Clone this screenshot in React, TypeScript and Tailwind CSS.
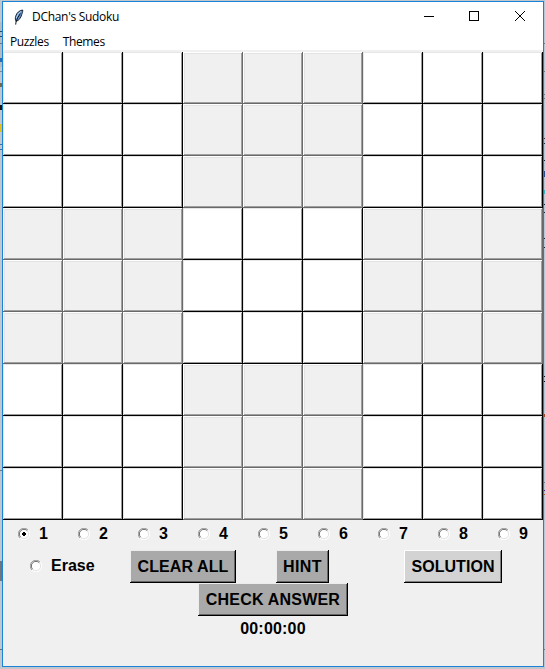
import { useState } from "react";

const uiFont = "font-['Open_Sans','Noto_Sans',sans-serif]";

function Feather() {
  return (
    <svg width="12" height="17" viewBox="0 0 12 17" className="shrink-0">
      <path d="M9.7 1C6.8 1.2 3.8 3.4 2.7 7.2C2.1 9.4 2.3 11 3.1 12.4C6.3 11.3 8 8.6 8.7 5.6C9.2 4.2 9.8 3.2 9.7 1Z" fill="#5d93d1" stroke="#1d222b" strokeWidth="1" />
      <path d="M7.6 2.6C5.2 4.2 3.9 6.9 3.4 9.4" stroke="#c4d8ef" strokeWidth="1" fill="none" />
      <path d="M7.4 4.5C5.7 6.9 4.1 9.4 3.1 12.4L2.7 15.6" stroke="#14181f" strokeWidth="1" fill="none" />
    </svg>
  );
}

function Cell({ shaded }: { shaded: boolean }) {
  return (
    <div
      className={`h-[52px] w-[60px] ${
        shaded
          ? "bg-[#f0f0f0] shadow-[inset_-1px_-1px_0_#696969,inset_1px_1px_0_#ffffff,inset_-2px_-2px_0_#a0a0a0,inset_2px_2px_0_#e3e3e3]"
          : "bg-white shadow-[inset_-1px_-1px_0_#000000,inset_1px_1px_0_#e6e6e6,inset_-2px_-2px_0_#999999]"
      }`}
    />
  );
}

function Radio({ checked, label, onPick }: { checked: boolean; label: string; onPick: () => void }) {
  return (
    <button onClick={onPick} className="flex h-[18px] items-center text-[16px] leading-[18px] font-bold">
      <svg width="12" height="12" viewBox="0 0 12 12" className="mr-[9px] shrink-0">
        <circle cx="6" cy="6" r="5" fill="white" />
        <path d="M1.9 10.1A5.5 5.5 0 0 1 10.1 1.9" fill="none" stroke="#a0a0a0" />
        <path d="M2.7 9.3A4.5 4.5 0 0 1 9.3 2.7" fill="none" stroke="#696969" />
        <path d="M10.1 1.9A5.5 5.5 0 0 1 1.9 10.1" fill="none" stroke="white" />
        <path d="M9.3 2.7A4.5 4.5 0 0 1 2.7 9.3" fill="none" stroke="#e3e3e3" />
        {checked && <path d="M5 4h2v1h1v2h-1v1h-2v-1h-1v-2h1z" fill="black" />}
      </svg>
      {label}
    </button>
  );
}

function PushButton({ label, light = false, className }: { label: string; light?: boolean; className: string }) {
  return (
    <button
      className={`h-[33px] shrink-0 text-center text-[16px] leading-[33px] font-bold whitespace-nowrap ${
        light
          ? "bg-[#d3d3d3] shadow-[inset_-1px_-1px_0_#000000,inset_1px_1px_0_#ffffff,inset_-2px_-2px_0_#7f7f7f]"
          : "bg-[#a9a9a9] shadow-[inset_-1px_-1px_0_#000000,inset_1px_1px_0_#ececec,inset_-2px_-2px_0_#656565]"
      } ${className}`}
    >
      {label}
    </button>
  );
}

const leftMarks = [
  "top-[22px] h-[45px] bg-[#b7bbc0]",
  "top-[31px] h-px bg-[#174d72]",
  "top-[36px] h-px bg-[#174d72]",
  "top-[43px] h-px bg-[#777]",
  "top-[58px] h-[4px] bg-[#286daf]",
  "top-[71px] h-px bg-[#888]",
  "top-[83px] h-[4px] bg-[#806744]",
  "top-[105px] h-[5px] bg-[#20150c]",
  "top-[124px] h-[8px] bg-[#e5bd26]",
  "top-[144px] h-px bg-[#3972a3]",
  "top-[149px] h-px bg-[#3972a3]",
  "top-[470px] h-px bg-[#777]",
  "top-[561px] h-[20px] bg-[#70757b]",
  "top-[649px] h-px bg-[#6c6c6c]",
];

const rightMarks = [
  "top-[43px] h-px bg-[#777]",
  "top-[71px] h-px bg-[#777]",
  "top-[94px] h-px bg-[#777]",
  "top-[98px] h-px bg-[#777]",
  "top-[138px] h-px bg-[#4a2530]",
  "top-[143px] h-px bg-[#172a3e]",
  "top-[160px] h-px bg-[#172a3e]",
  "top-[171px] h-[6px] bg-[#254e91]",
  "top-[190px] h-[4px] bg-[#35b3c2]",
  "top-[204px] h-px bg-[#172a3e]",
  "top-[212px] h-px bg-[#172a3e]",
  "top-[238px] h-px bg-[#172a3e]",
  "top-[247px] h-px bg-[#172a3e]",
  "top-[376px] h-px bg-[#111]",
  "top-[381px] h-px bg-[#111]",
  "top-[414px] h-[3px] bg-[#a34425]",
  "top-[482px] h-px bg-[#777]",
  "top-[490px] h-px bg-[#43206c]",
  "top-[494px] h-px bg-[#a35c25]",
  "top-[649px] h-px bg-[#777]",
];

export default function App() {
  const [picked, setPicked] = useState(1);
  const cells = Array.from({ length: 81 }, (_, i) => i);
  return (
    <div className="relative h-[669px] w-[545px] overflow-hidden bg-[#c3c7cb] pt-px pl-[2px] text-black">
      {leftMarks.map((m) => (
        <div key={m} className={`absolute left-0 w-[2px] ${m}`} />
      ))}
      <div className="absolute top-0 right-0 h-full w-px bg-[#b9c7d5]" />
      {rightMarks.map((m) => (
        <div key={m} className={`absolute right-0 w-px ${m}`} />
      ))}
      <div className="relative flex h-[666px] w-[542px] flex-col border border-[#1883d7] bg-[#f0f0f0]">
        <header className={`flex h-[30px] shrink-0 items-center bg-white pl-[10px] ${uiFont}`}>
          <Feather />
          <span className="ml-[7px] w-[360px] text-[12px] tracking-[-0.3px]">DChan's Sudoku</span>
          <svg width="140" height="30" viewBox="0 0 140 30" className="shrink-0" fill="none" stroke="black" shapeRendering="crispEdges">
            <path d="M32 14.5h10" />
            <path d="M77.5 9.5h9v9h-9z" />
            <path d="M123 9l10 10M133 9l-10 10" shapeRendering="auto" />
          </svg>
        </header>
        <nav className={`flex h-[18px] shrink-0 items-center gap-[14px] bg-white pt-[2px] pl-[7px] text-[12px] tracking-[-0.37px] ${uiFont}`}>
          <span>Puzzles</span>
          <span>Themes</span>
        </nav>
        <main className="mt-[2px] grid w-[540px] grid-cols-9">
          {cells.map((i) => {
            const block = Math.floor(i / 27) + Math.floor((i % 9) / 3);
            return <Cell key={i} shaded={block % 2 === 1} />;
          })}
        </main>
        <section className="font-['Liberation_Sans',Arial,sans-serif]">
          <div className="grid h-[30px] grid-cols-9 pt-[5px]">
            {[1, 2, 3, 4, 5, 6, 7, 8, 9].map((n) => (
              <div key={n} className="pl-[15px]">
                <Radio label={String(n)} checked={picked === n} onPick={() => setPicked(n)} />
              </div>
            ))}
          </div>
          <div className="flex h-[33px] items-center pl-[27px]">
            <div className="w-[100px] shrink-0 pb-[2px]">
              <Radio label="Erase" checked={picked === 0} onPick={() => setPicked(0)} />
            </div>
            <PushButton label="CLEAR ALL" className="w-[106px] tracking-[0.1px]" />
            <PushButton label="HINT" className="ml-[40px] w-[53px] tracking-[0.4px]" />
            <PushButton label="SOLUTION" light className="ml-[75px] w-[98px] tracking-[0.05px]" />
          </div>
          <div className="flex h-[33px] pl-[195px]">
            <PushButton label="CHECK ANSWER" className="w-[150px] tracking-[0.2px]" />
          </div>
          <div className="h-[25px] text-center text-[16px] leading-[25px] font-bold tracking-[0.2px]">00:00:00</div>
        </section>
      </div>
    </div>
  );
}
